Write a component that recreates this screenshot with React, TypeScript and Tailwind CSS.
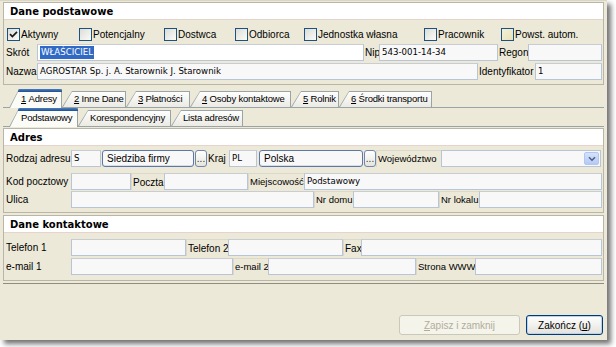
import React from "react";

const V = "font-['DejaVu_Sans',sans-serif] text-[8.6px]";
const T = "font-['Liberation_Sans',Arial,sans-serif] text-[10px]";
const T9 = "font-['Liberation_Sans',Arial,sans-serif] text-[9.5px]";

function Check({ label, w, checked = false, yellow = false }: { label: string; w: string; checked?: boolean; yellow?: boolean }) {
  return (
    <div className={`${w} shrink-0 flex items-center h-[13px]`}>
      <div
        className={`w-[13px] h-[13px] shrink-0 border border-[#1c5180] flex items-center justify-center ${
          yellow ? "bg-gradient-to-br from-[#f3f0d8] to-[#e8e2b8]" : "bg-gradient-to-br from-[#dcdcd7] to-[#fbfbf9]"
        }`}
      >
        {checked && (
          <svg width="9" height="9" viewBox="0 0 9 9">
            <path d="M1 4.2 L3.4 6.6 L8 1.8" stroke="#1a1a1a" strokeWidth="1.7" fill="none" />
          </svg>
        )}
      </div>
      <span className={`${T} ml-[1px] text-black`}>{label}</span>
    </div>
  );
}

function Field({ w, children, cls = "" }: { w: string; children?: React.ReactNode; cls?: string }) {
  return (
    <div
      className={`${w} h-[17px] shrink-0 border border-[#b7c5d6] border-t-[#c8cdd4] bg-[#f8f8f8] flex items-center pl-[2px] overflow-hidden whitespace-nowrap ${cls}`}
    >
      {children}
    </div>
  );
}

function Lbl({ w, children, f = T, cell = false }: { w: string; children: React.ReactNode; f?: string; cell?: boolean }) {
  return (
    <div
      className={`${w} shrink-0 h-[17px] flex items-center pl-[1px] whitespace-nowrap overflow-hidden ${f} ${
        cell ? "border-t border-l border-[#dcd9cb]" : ""
      }`}
    >
      {children}
    </div>
  );
}

function Header({ title }: { title: string }) {
  return (
    <div className="h-[17px] bg-white border-b border-[#e6d3cc] flex items-center pl-[6px]">
      <span className="font-['DejaVu_Sans',sans-serif] text-[10px] font-bold text-black">{title}</span>
    </div>
  );
}

function Dots({ cls = "" }: { cls?: string }) {
  return (
    <div
      className={`w-[12px] h-[17px] shrink-0 border border-[#6f86ad] rounded-[3px] bg-gradient-to-b from-white to-[#e5e4dc] flex items-center justify-center ${cls}`}
    >
      <span className={`${T} text-[8px] leading-none text-[#333]`}>...</span>
    </div>
  );
}

function RoundField({ w, children, cls = "" }: { w: string; children: React.ReactNode; cls?: string }) {
  return (
    <div
      className={`${w} h-[17px] shrink-0 border border-[#5d78a6] rounded-[3px] bg-[#f8f8f8] shadow-[inset_0_-1px_0_#d9dde6] flex items-center pl-[4px] ${T} ${cls}`}
    >
      {children}
    </div>
  );
}

function Tab({
  w,
  n,
  label,
  active = false,
}: {
  w: string;
  n: string;
  label: string;
  active?: boolean;
}) {
  return (
    <div className={`${w} relative shrink-0 ${active ? "h-[19px] z-10 -mb-[1px]" : "h-[16px]"}`}>
      <div className="absolute inset-0 bg-[#9aa3a6] [clip-path:polygon(10px_0,100%_0,100%_100%,0_100%)]" />
      <div
        className={`absolute left-[1px] right-[1px] top-[1px] ${active ? "bottom-0 bg-[#fbfbf8]" : "bottom-0 bg-gradient-to-b from-[#fefefe] to-[#ebeae3]"} [clip-path:polygon(9px_0,100%_0,100%_100%,0_100%)]`}
      />
      {active && (
        <div className="absolute top-0 left-[9px] right-0 h-[3px] rounded-t-[2px] bg-gradient-to-b from-[#4a7fc1] to-[#1f4f8f]" />
      )}
      <div
        className={`absolute inset-0 flex items-center pl-[12px] ${active ? "pt-[3px] pb-[1px]" : "pt-[1px]"} ${T9} tracking-[-0.2px] whitespace-nowrap`}
      >
        {n ? (
          <>
            <span className="underline">{n}</span>&nbsp;{label}
          </>
        ) : (
          label
        )}
      </div>
    </div>
  );
}

export default function App() {
  return (
    <div className="w-[616px] h-[347px] bg-white overflow-hidden text-black">
      <div className="w-[607px] h-[340px] bg-[#ece9d8] shadow-[4px_4px_5px_rgba(0,0,0,0.55)] flex flex-col border-t border-[#d9d6c6]">
        {/* Dane podstawowe */}
        <div className="mx-[3px] mt-[1px] border border-[#b9b6a8] bg-[#ece9d8] pb-[4px]">
          <Header title="Dane podstawowe" />
          <div className="flex items-center pl-[3px] mt-[8px]">
            <Check w="w-[72px]" label="Aktywny" checked />
            <Check w="w-[85px]" label="Potencjalny" />
            <Check w="w-[71px]" label="Dostwca" />
            <Check w="w-[69px]" label="Odbiorca" />
            <Check w="w-[120px]" label="Jednostka własna" />
            <Check w="w-[77px]" label="Pracownik" />
            <Check w="w-[90px]" label="Powst. autom." yellow />
          </div>
          <div className="flex mt-[3px]">
            <Lbl w="w-[33px]">
              <span className="pl-[1px]">Skrót</span>
            </Lbl>
            <Field w="w-[327px]" cls="bg-white">
              <span className={`${V} bg-[#316ac5] text-white px-[1px]`}>WŁAŚCICIEL</span>
            </Field>
            <Lbl w="w-[15px]">Nip</Lbl>
            <Field w="w-[119px]">
              <span className={V}>543-001-14-34</span>
            </Field>
            <Lbl w="w-[30px]">Regon</Lbl>
            <Field w="w-[74px]" />
          </div>
          <div className="flex mt-[2px]">
            <Lbl w="w-[33px]">
              <span className="pl-[1px]">Nazwa</span>
            </Lbl>
            <Field w="w-[441px]">
              <span className={V}>AGROSTAR Sp. j. A. Starownik J. Starownik</span>
            </Field>
            <Lbl w="w-[57px]">Identyfikator</Lbl>
            <Field w="w-[67px]">
              <span className={V}>1</span>
            </Field>
          </div>
        </div>

        {/* Tabs row 1 */}
        <div className="mx-[3px] mt-[5px] h-[18px] flex items-end border-b border-[#9aa3a6] pl-[6px]">
          <Tab w="w-[53px]" n="1" label="Adresy" active />
          <Tab w="w-[64px]" n="2" label="Inne Dane" />
          <Tab w="w-[64px]" n="3" label="Płatności" />
          <Tab w="w-[101px]" n="4" label="Osoby kontaktowe" />
          <Tab w="w-[48px]" n="5" label="Rolnik" />
          <Tab w="w-[93px]" n="6" label="Środki transportu" />
        </div>
        {/* Tabs row 2 */}
        <div className="mx-[3px] mt-[1px] h-[18px] flex items-end border-b border-[#9aa3a6] pl-[6px]">
          <Tab w="w-[69px]" n="" label="Podstawowy" active />
          <Tab w="w-[93px]" n="" label="Korespondencyjny" />
          <Tab w="w-[72px]" n="" label="Lista adresów" />
        </div>

        {/* Panel */}
        <div className="mx-[3px] border-b border-[#8f8c80] pb-[2px]">
          {/* Adres */}
          <div className="mt-[1px] border border-[#b9b6a8] pb-[4px]">
            <Header title="Adres" />
            <div className="flex mt-[4px] items-center">
              <Lbl w="w-[67px]">
                <span className="pl-[1px]">Rodzaj adresu</span>
              </Lbl>
              <Field w="w-[30px]">
                <span className={V}>S</span>
              </Field>
              <RoundField w="w-[92px]" cls="ml-[1px]">
                Siedziba firmy
              </RoundField>
              <Dots cls="ml-[1px]" />
              <Lbl w="w-[22px]">Kraj</Lbl>
              <Field w="w-[28px]">
                <span className={V}>PL</span>
              </Field>
              <RoundField w="w-[104px]" cls="ml-[2px]">
                Polska
              </RoundField>
              <Dots cls="ml-[1px]" />
              <Lbl w="w-[65px]" f={T9} cell>
                Województwo
              </Lbl>
              <div className="w-[160px] h-[17px] shrink-0 border border-[#b7c5d6] bg-[#f8f8f8] flex items-center justify-end pr-[1px]">
                <div className="w-[15px] h-[13px] rounded-[2px] bg-gradient-to-b from-[#d6e2fc] to-[#b4c9f5] border border-[#b3c6ee] flex items-center justify-center">
                  <svg width="8" height="6" viewBox="0 0 8 6">
                    <path d="M1 1.2 L4 4.2 L7 1.2" stroke="#4d6185" strokeWidth="1.6" fill="none" />
                  </svg>
                </div>
              </div>
            </div>
            <div className="flex mt-[6px]">
              <Lbl w="w-[67px]">
                <span className="pl-[1px]">Kod pocztowy</span>
              </Lbl>
              <Field w="w-[60px]" />
              <Lbl w="w-[33px]" cell>
                Poczta
              </Lbl>
              <Field w="w-[84px]" />
              <Lbl w="w-[56px]" f={T9} cell>
                Miejscowość
              </Lbl>
              <Field w="w-[298px]">
                <span className={V}>Podstawowy</span>
              </Field>
            </div>
            <div className="flex mt-[1px]">
              <Lbl w="w-[67px]">
                <span className="pl-[1px]">Ulica</span>
              </Lbl>
              <Field w="w-[243px]" />
              <Lbl w="w-[39px]" f={T9} cell>
                Nr domu
              </Lbl>
              <Field w="w-[86px]" />
              <Lbl w="w-[40px]" f={T9} cell>
                Nr lokalu
              </Lbl>
              <Field w="w-[123px]" />
            </div>
          </div>

          {/* Dane kontaktowe */}
          <div className="mt-[2px] border border-[#b9b6a8] pb-[5px]">
            <Header title="Dane kontaktowe" />
            <div className="flex mt-[6px]">
              <Lbl w="w-[67px]">
                <span className="pl-[1px]">Telefon 1</span>
              </Lbl>
              <Field w="w-[115px]" />
              <Lbl w="w-[42px]" cell>
                Telefon 2
              </Lbl>
              <Field w="w-[115px]" />
              <Lbl w="w-[18px]" cell>
                Fax
              </Lbl>
              <Field w="w-[241px]" />
            </div>
            <div className="flex mt-[2px]">
              <Lbl w="w-[67px]">
                <span className="pl-[1px]">e-mail 1</span>
              </Lbl>
              <Field w="w-[162px]" />
              <Lbl w="w-[35px]" f={T9} cell>
                e-mail 2
              </Lbl>
              <Field w="w-[148px]" />
              <Lbl w="w-[59px]" f={T9} cell>
                Strona WWW
              </Lbl>
              <Field w="w-[127px]" />
            </div>
          </div>
        </div>

        {/* Buttons */}
        <div className="mt-auto mb-[5px] flex justify-end gap-[6px] pr-[4px]">
          <div
            className={`w-[121px] h-[20px] border border-[#cac8bb] rounded-[3px] bg-[#f5f4ea] flex items-center justify-center ${T} text-[#b0ad9d]`}
          >
            <span className="underline">Z</span>apisz i zamknij
          </div>
          <div
            className={`w-[77px] h-[20px] border border-[#003c74] rounded-[3px] bg-gradient-to-b from-white to-[#e3e2da] shadow-[inset_0_0_0_1px_#bcd0f2] flex items-center justify-center ${T}`}
          >
            Zakończ (<span className="underline">u</span>)
          </div>
        </div>
      </div>
    </div>
  );
}
